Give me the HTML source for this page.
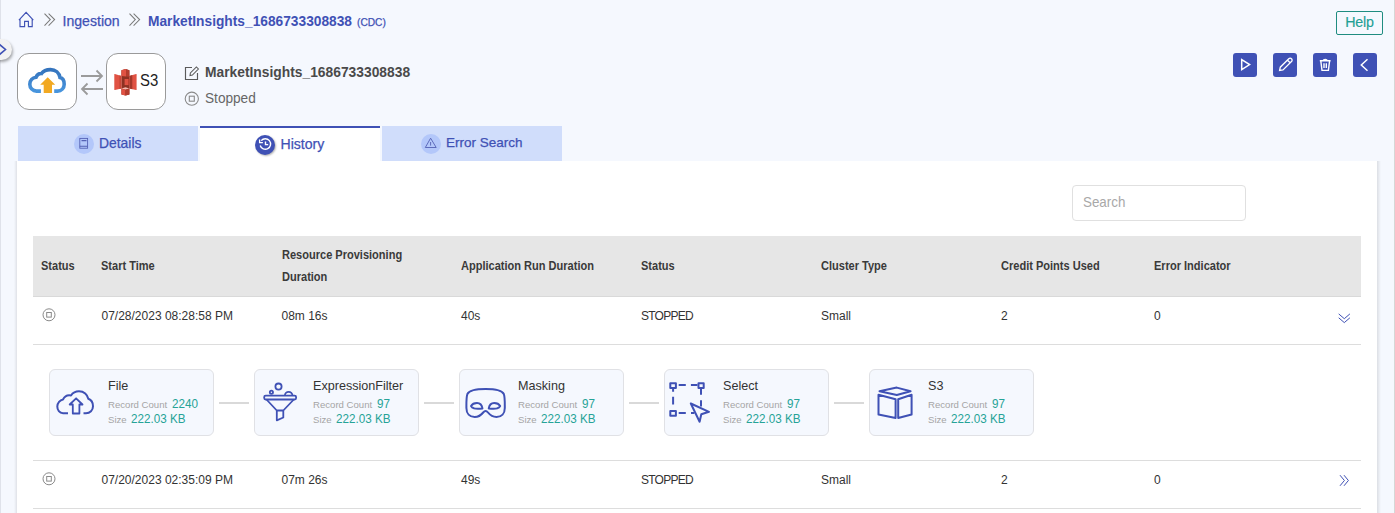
<!DOCTYPE html>
<html><head><meta charset="utf-8">
<style>
*{margin:0;padding:0;box-sizing:border-box}
html,body{width:1395px;height:513px;overflow:hidden;background:#f5f8fe;font-family:"Liberation Sans",sans-serif;position:relative}
.a{position:absolute;white-space:nowrap;line-height:normal}
.ind{color:#3f51b5;-webkit-text-stroke:0.25px #3f51b5}
.leftline{position:absolute;left:0;top:0;width:1px;height:513px;background:#dfe2ea}
.rightline{position:absolute;left:1394px;top:0;width:1px;height:513px;background:#d6d6d6}
.toggle{position:absolute;left:-9px;top:39px;width:21px;height:21px;border-radius:50%;background:#f2f2f2;box-shadow:1px 2px 3px rgba(0,0,0,.35)}
.logo{position:absolute;top:53px;width:60px;height:57px;border:1px solid #9a9a9a;border-radius:12px;background:#fff}
.btn{position:absolute;top:53px;width:24px;height:24px;border-radius:3px;background:#3f51b5}
.tab{position:absolute;top:126px;width:180px;height:35px;background:#d0ddfb}
.tabicon{position:absolute;width:20px;height:20px;border-radius:50%;background:#b3c7fa}
.panel{position:absolute;left:17px;top:161px;width:1360px;height:360px;background:#fff}
.th{position:absolute;left:33px;top:236px;width:1328px;height:61px;background:#e6e6e6;border-bottom:1px solid #d9d9d9}
.hl{position:absolute;left:33px;width:1328px;height:1px;background:#dddddd}
.h{font-size:12.2px;font-weight:bold;color:#3a3a3a;transform:scaleX(0.905);transform-origin:0 0}
.d{font-size:12px;color:#333}
.card{position:absolute;top:369px;width:165px;height:67px;border:1px solid #e0e1e5;border-radius:6px;background:#f5f8fe}
.conn{position:absolute;top:402px;width:30px;height:2px;background:#d9d9d9}
.cn{font-size:12.6px;color:#333}
.cl{font-size:9.6px;color:#a5a5a5}
.cv{font-size:12.3px;color:#26a397;transform:scaleX(0.95);transform-origin:0 0}
</style></head><body>
<div class="leftline"></div>
<div class="rightline"></div>

<!-- breadcrumb -->
<svg class="a" style="left:18px;top:11px" width="17" height="17" viewBox="0 0 17 17"><path d="M0.9,9.2 L8.1,1.3 L15.3,9.2 M2,8 V15.6 H6.6 V10.3 H10.4 V15.6 H14.2 V8" fill="none" stroke="#3f51b5" stroke-width="1.15"/></svg>
<svg class="a" style="left:43px;top:12px" width="14" height="15" viewBox="0 0 14 15"><path d="M1.5 1.6 L7.3 7.6 L1.5 13.6 M5.6 1.6 L11.6 7.6 L5.6 13.6" fill="none" stroke="#7a7a7a" stroke-width="1.05"/></svg>
<div class="a ind" style="left:62.5px;top:13.3px;font-size:14.1px">Ingestion</div>
<svg class="a" style="left:128px;top:12px" width="14" height="15" viewBox="0 0 14 15"><path d="M1.5 1.6 L7.3 7.6 L1.5 13.6 M5.6 1.6 L11.6 7.6 L5.6 13.6" fill="none" stroke="#7a7a7a" stroke-width="1.05"/></svg>
<div class="a" style="left:148.3px;top:13.1px;font-size:14.4px;font-weight:bold;color:#3f51b5;transform:scaleX(0.955);transform-origin:0 0">MarketInsights_1686733308838</div>
<div class="a ind" style="left:357px;top:16.5px;font-size:10.2px">(CDC)</div>

<div class="a" style="left:1336px;top:11px;width:47px;height:24px;border:1.2px solid #1f8c80;border-radius:2px"></div>
<div class="a" style="left:1345.3px;top:13.9px;font-size:14.3px;letter-spacing:-0.25px;color:#21a094;-webkit-text-stroke:0.15px #21a094">Help</div>

<!-- toggle -->
<div class="toggle"></div>
<svg class="a" style="left:0;top:43px" width="7" height="13" viewBox="0 0 7 13"><path d="M-1 1 L5.5 6.5 L-1 12" fill="none" stroke="#3f51b5" stroke-width="1.6"/></svg>

<!-- logos -->
<div class="logo" style="left:17px"></div>
<div class="logo" style="left:106px"></div>
<svg class="a" style="left:80px;top:69px" width="24" height="27" viewBox="0 0 24 27"><path d="M1 7 H22 M16.5 1.5 L22 7 L16.5 12.5 M23 20 H2 M7.5 14.5 L2 20 L7.5 25.5" fill="none" stroke="#9b9b9b" stroke-width="1.8"/></svg>

<!-- logo icons -->
<svg class="a" style="left:0;top:0" width="200" height="120" viewBox="0 0 200 120">
<defs><linearGradient id="cg" x1="0" y1="0" x2="0" y2="1"><stop offset="0" stop-color="#3574bd"/><stop offset="1" stop-color="#4895dd"/></linearGradient></defs>
<path d="M40.9,91.1 H36.5 C32.7,91.1 29.8,88 29.8,84.3 C29.8,80.5 32.5,77.8 36,77.3 C37,74.7 39.2,73.3 41.5,73.5 C43.2,71 46.5,69.6 50.5,69.6 C55.5,69.6 59.3,73 60,77.6 C62.8,78.3 64.2,81 64.2,84.3 C64.2,88 61.5,91.1 57.5,91.1 H54.2" fill="none" stroke="url(#cg)" stroke-width="3.6"/>
<path d="M47.7,77.2 L55.2,84.7 H52 V93 H43.7 V84.7 H40.2 Z" fill="#f2a922"/>
<!-- s3 -->
<path d="M121.4,70.2 L125.5,69 L129.4,70.2 V94.5 L125.5,95.6 L121.4,94.5 Z" fill="#8c3123"/>
<path d="M114.3,74.6 Q114.3,74 114.9,74.1 L121.4,75.9 V88.4 L114.9,90.1 Q114.3,90.2 114.3,89.5 Z" fill="#e05243"/>
<path d="M119.3,75.3 L121.4,75.9 V88.4 L119.3,89 Z" fill="#c84637"/>
<path d="M129.4,75.9 L136,74.1 Q136.6,74 136.6,74.6 V89.5 Q136.6,90.2 136,90.1 L129.4,88.4 Z" fill="#e05243"/>
<path d="M129.4,75.9 L132.3,75.1 V89.2 L129.4,88.4 Z" fill="#a3382a"/>
<path d="M121.4,70.2 L125.5,69 L126.1,69.2 V76.4 L121.4,76 Z" fill="#e05243"/>
<path d="M126.1,69.2 L129.4,70.2 V76.7 L126.1,76.4 Z" fill="#b43c2e"/>
<path d="M124.6,79 H129.4 V85.1 H124.6 Z" fill="#df5142"/>
<path d="M128.2,79 H129.4 V85.1 H128.2 Z" fill="#b43c2e"/>
<path d="M121.4,88.6 L125.5,87.2 L129.4,88.6 L125.5,89.7 Z" fill="#f4b5ac"/>
<path d="M121.4,88.6 L125.5,89.7 V95.6 L121.4,94.5 Z" fill="#e05243"/>
<path d="M125.5,89.7 L129.4,88.6 V94.5 L125.5,95.6 Z" fill="#b43c2e"/>
</svg>
<div class="a" style="left:140.2px;top:71.8px;font-size:16px;color:#222;transform:scaleX(0.93);transform-origin:0 0">S3</div>

<!-- title -->
<svg class="a" style="left:184px;top:65px" width="16" height="16" viewBox="0 0 16 16"><path d="M8 2.5 H1.5 V14.5 H13.5 V8" fill="none" stroke="#5a5a5a" stroke-width="1.15"/><path d="M6 10.5 L6.4 8 L12.4 2 L14.4 4 L8.4 10 Z" fill="none" stroke="#5a5a5a" stroke-width="1.05"/></svg>
<div class="a" style="left:205.3px;top:64.4px;font-size:14.4px;font-weight:bold;color:#4a4a4a;transform:scaleX(0.96);transform-origin:0 0">MarketInsights_1686733308838</div>
<svg class="a" style="left:184px;top:91px" width="16" height="16" viewBox="0 0 16 16"><circle cx="7.8" cy="7.7" r="6.6" fill="none" stroke="#8a8a8a" stroke-width="1.1"/><rect x="5.3" y="5.2" width="5" height="5" fill="none" stroke="#8a8a8a" stroke-width="1.1"/></svg>
<div class="a" style="left:205.2px;top:89.9px;font-size:14.5px;color:#666;transform:scaleX(0.94);transform-origin:0 0">Stopped</div>

<!-- buttons -->
<div class="btn" style="left:1233px"></div>
<div class="btn" style="left:1273px"></div>
<div class="btn" style="left:1313px"></div>
<div class="btn" style="left:1353px"></div>

<!-- tabs -->
<div class="tab" style="left:18px"></div>
<div class="tab" style="left:382px"></div>
<div class="tabicon" style="left:74px;top:134px"></div>
<div class="a ind" style="left:99px;top:135.4px;font-size:13.9px">Details</div>
<div class="tabicon" style="left:421px;top:134px"></div>
<div class="a ind" style="left:446px;top:135.4px;font-size:13.5px">Error Search</div>

<!-- panel -->
<div class="panel"></div>
<div class="a" style="left:14px;top:161px;width:3px;height:352px;background:linear-gradient(to right,rgba(0,0,0,0),rgba(0,0,0,.09))"></div>
<div class="a" style="left:1377px;top:161px;width:4px;height:352px;background:linear-gradient(to right,rgba(0,0,0,.1),rgba(0,0,0,0))"></div>
<div class="a" style="left:200px;top:126px;width:180px;height:35px;background:#fff;border-top:2px solid #3f51b5"></div>
<div class="a" style="left:255px;top:135px;width:20px;height:20px;border-radius:50%;background:#3f51b5;box-shadow:1px 1px 2px rgba(0,0,0,.3)"></div>
<div class="a ind" style="left:280.5px;top:136.4px;font-size:14.1px">History</div>
<div class="a" style="left:1072px;top:185px;width:174px;height:36px;border:1px solid #e0e0e0;border-radius:4px;background:#fff"></div>
<div class="a" style="left:1082.7px;top:193.8px;font-size:14.4px;color:#a8a8a8;transform:scaleX(0.93);transform-origin:0 0">Search</div>

<!-- table header -->
<div class="th"></div>
<div class="a h" style="left:41px;top:259px">Status</div>
<div class="a h" style="left:101px;top:259px">Start Time</div>
<div class="a h" style="left:281.5px;top:248px">Resource Provisioning</div>
<div class="a h" style="left:281.5px;top:270px">Duration</div>
<div class="a h" style="left:461px;top:259px">Application Run Duration</div>
<div class="a h" style="left:641px;top:259px">Status</div>
<div class="a h" style="left:821px;top:259px">Cluster Type</div>
<div class="a h" style="left:1001px;top:259px">Credit Points Used</div>
<div class="a h" style="left:1154px;top:259px">Error Indicator</div>

<!-- row 1 -->
<div class="hl" style="top:344px"></div>
<svg class="a" style="left:42px;top:308px" width="14" height="14" viewBox="0 0 14 14"><circle cx="7" cy="6.8" r="6" fill="none" stroke="#8a8a8a" stroke-width="1"/><rect x="4.7" y="4.5" width="4.6" height="4.6" fill="none" stroke="#8a8a8a" stroke-width="1"/></svg>
<div class="a d" style="left:101.5px;top:309.1px">07/28/2023 08:28:58 PM</div>
<div class="a d" style="left:281.5px;top:309.1px">08m 16s</div>
<div class="a d" style="left:461px;top:309.1px">40s</div>
<div class="a d" style="left:641px;top:309.1px;letter-spacing:-0.75px">STOPPED</div>
<div class="a d" style="left:821px;top:309.1px">Small</div>
<div class="a d" style="left:1001px;top:309.1px">2</div>
<div class="a d" style="left:1154px;top:309.1px">0</div>
<svg class="a" style="left:1338px;top:312px" width="13" height="12" viewBox="0 0 13 12"><path d="M0.7 1.9 L6.3 6.7 L11.9 1.9 M0.7 5.8 L6.3 10.6 L11.9 5.8" fill="none" stroke="#3f51b5" stroke-width="1"/></svg>

<!-- cards -->
<div class="card" style="left:49px"></div>
<div class="card" style="left:254px"></div>
<div class="card" style="left:459px"></div>
<div class="card" style="left:664px"></div>
<div class="card" style="left:869px"></div>
<div class="conn" style="left:219px"></div>
<div class="conn" style="left:424px"></div>
<div class="conn" style="left:629px"></div>
<div class="conn" style="left:834px"></div>

<div class="a cn" style="left:108px;top:378.6px">File</div>
<div class="a cl" style="left:108px;top:399px">Record Count</div>
<div class="a cv" style="left:172.0px;top:396.6px">2240</div>
<div class="a cl" style="left:108px;top:414px">Size</div>
<div class="a cv" style="left:131px;top:411.6px">222.03 KB</div>
<div class="a cn" style="left:313px;top:378.6px">ExpressionFilter</div>
<div class="a cl" style="left:313px;top:399px">Record Count</div>
<div class="a cv" style="left:377.0px;top:396.6px">97</div>
<div class="a cl" style="left:313px;top:414px">Size</div>
<div class="a cv" style="left:336px;top:411.6px">222.03 KB</div>
<div class="a cn" style="left:518px;top:378.6px">Masking</div>
<div class="a cl" style="left:518px;top:399px">Record Count</div>
<div class="a cv" style="left:582.0px;top:396.6px">97</div>
<div class="a cl" style="left:518px;top:414px">Size</div>
<div class="a cv" style="left:541px;top:411.6px">222.03 KB</div>
<div class="a cn" style="left:723px;top:378.6px">Select</div>
<div class="a cl" style="left:723px;top:399px">Record Count</div>
<div class="a cv" style="left:787.0px;top:396.6px">97</div>
<div class="a cl" style="left:723px;top:414px">Size</div>
<div class="a cv" style="left:746px;top:411.6px">222.03 KB</div>
<div class="a cn" style="left:928px;top:378.6px">S3</div>
<div class="a cl" style="left:928px;top:399px">Record Count</div>
<div class="a cv" style="left:992.0px;top:396.6px">97</div>
<div class="a cl" style="left:928px;top:414px">Size</div>
<div class="a cv" style="left:951px;top:411.6px">222.03 KB</div>
<!-- icon overlay -->
<svg class="a" style="left:0;top:0" width="1395" height="513" viewBox="0 0 1395 513">
<g fill="none" stroke="#3f51b5" stroke-width="2" stroke-linejoin="round" stroke-linecap="butt">
<!-- file cloud -->
<path d="M68,413.2 L63,413.2 C59.5,413.2 57.3,410 57.3,406.5 C57.3,402.8 60,400 63,399.5 C64.5,396.5 67.5,394.8 71,395.5 C73,392.5 76,391.3 79,391.3 C84,391.3 87.5,394.8 88.3,398.8 C91,399.8 93,402.8 93,406.3 C93,410.3 90,413.2 86,413.2 L83.5,413.2"/>
<path stroke-width="1.8" d="M72.8,413.5 V404.5 H69.7 L76.1,398.3 L82.5,404.5 H79.4 V413.5 Z"/>
<!-- funnel -->
<g stroke-width="1.8"><rect x="264.2" y="395.6" width="31.9" height="3.9" rx="1.5"/>
<path d="M266.5,399.5 L276.8,410.5 H283.3 L293.8,399.5 M276.8,410.5 V420.3 L283.3,417.5 V410.5"/>
<circle cx="278.5" cy="386.6" r="3.1"/>
<circle cx="271.4" cy="392.2" r="1.6"/>
<path d="M284.9,395.6 A3.75,3.75 0 0 1 292.4,395.6"/></g>
<!-- mask -->
<path d="M485.6,389 C495,389 502,390 503.8,394 C505,397 504.8,403 504.8,408 C504.8,413.5 501.5,417 496.5,417 C492,417 490,415 488,412.5 C487,411.3 486.3,411 485.6,411 C484.9,411 484.2,411.3 483.2,412.5 C481.2,415 479,417 474.7,417 C469.7,417 466.4,413.5 466.4,408 C466.4,403 466.2,397 467.4,394 C469.2,390 476,389 485.6,389 Z"/>
<path stroke-width="1.9" d="M471,406 C472.5,403.5 475,403 477,403 C480,403 482,405.5 482.5,408.5 C479,408.8 475.5,408.8 474,408.3 C472.5,407.8 471.5,407 471,406 Z"/>
<path stroke-width="1.9" d="M500.2,406 C498.7,403.5 496.2,403 494.2,403 C491.2,403 489.2,405.5 488.7,408.5 C492.2,408.8 495.7,408.8 497.2,408.3 C498.7,407.8 499.7,407 500.2,406 Z"/>
<!-- select -->
<rect x="670.3" y="383.3" width="5.6" height="4.6" stroke-width="2"/>
<rect x="698.5" y="383.3" width="5.2" height="4.6" stroke-width="2"/>
<rect x="670.3" y="411" width="5.6" height="4.8" stroke-width="2"/>
<path stroke-width="2" d="M678.7,385.1 H685.8 M690.9,385.1 H697.5 M673.1,389 V391.7 M673.1,396.8 V404.4 M701,388.7 V394.8 M701,400.3 V406.4 M678.7,413 H685.8 M691,413 H694.4"/>
<path stroke-width="2" d="M690.8,403.5 L709,411.8 L701.3,414.3 L699.6,421.8 Z"/>
<!-- cube -->
<path stroke-width="2" d="M879.5,391.3 L896.8,387.6 L910.6,391.3 L896.8,395 Z M878.5,394.8 L895.6,399.2 V418 L878.5,414.5 Z M898.2,399.2 L911.6,394.8 V414.5 L898.2,418 Z"/>
</g>
<!-- tab icons -->
<g fill="none" stroke="#5461b4" stroke-width="0.9">
<rect x="79.8" y="138.4" width="7.8" height="9.8"/>
<path d="M81.5,140.6 H86.5 M79.8,146.3 H87.6" stroke-width="1.1"/>
<path d="M430.6,138.2 L425.3,147.5 H436.2 Z" stroke-linejoin="round"/>
<path d="M430.6,142 V145.6" stroke-width="0.9"/>
</g>
<g fill="none" stroke="#fff" stroke-width="1.4">
<path d="M261.2,140.6 A5.3,5.3 0 1 1 260.2,145.5"/>
<path d="M265.5,141.6 V144.6 H268.2"/>
<path d="M259.6,139.4 V142.7 H262.9" stroke-width="1.3"/>
</g>
<!-- button icons -->
<g fill="none" stroke="#fff" stroke-width="1.5" stroke-linejoin="miter">
<path d="M1241.7,59.6 V69.6 L1249.6,64.6 Z"/>
<path d="M1279.6,70.5 L1280.3,67.2 L1288.8,58.8 C1289.6,58 1290.8,58 1291.5,58.8 C1292.3,59.6 1292.3,60.7 1291.5,61.5 L1283,70 Z M1287.5,60.2 L1290.2,62.8" stroke-width="1.3"/>
<path d="M1319.8,60.8 H1330.6 M1320.8,60.8 L1322,70.4 H1328.4 L1329.6,60.8 M1323.3,60.3 C1323.5,59 1326.9,59 1327.1,60.3 M1324,63.2 V68 M1326.3,63.2 V68" stroke-width="1.4"/>
<path d="M1367.5,59.3 L1361.3,65 L1367.5,70.7" stroke-width="1.5"/>
</g>
</svg>

<!-- row 2 -->
<div class="hl" style="top:460px"></div>
<svg class="a" style="left:42px;top:472px" width="14" height="14" viewBox="0 0 14 14"><circle cx="7" cy="6.8" r="6" fill="none" stroke="#8a8a8a" stroke-width="1"/><rect x="4.7" y="4.5" width="4.6" height="4.6" fill="none" stroke="#8a8a8a" stroke-width="1"/></svg>
<div class="a d" style="left:101.5px;top:473.1px">07/20/2023 02:35:09 PM</div>
<div class="a d" style="left:281.5px;top:473.1px">07m 26s</div>
<div class="a d" style="left:461px;top:473.1px">49s</div>
<div class="a d" style="left:641px;top:473.1px;letter-spacing:-0.75px">STOPPED</div>
<div class="a d" style="left:821px;top:473.1px">Small</div>
<div class="a d" style="left:1001px;top:473.1px">2</div>
<div class="a d" style="left:1154px;top:473.1px">0</div>
<svg class="a" style="left:1339px;top:474px" width="12" height="13" viewBox="0 0 12 13"><path d="M1 1.2 L5.4 6.5 L1 11.8 M5 1.2 L9.4 6.5 L5 11.8" fill="none" stroke="#3f51b5" stroke-width="1"/></svg>
<div class="hl" style="top:508px"></div>

</body></html>
